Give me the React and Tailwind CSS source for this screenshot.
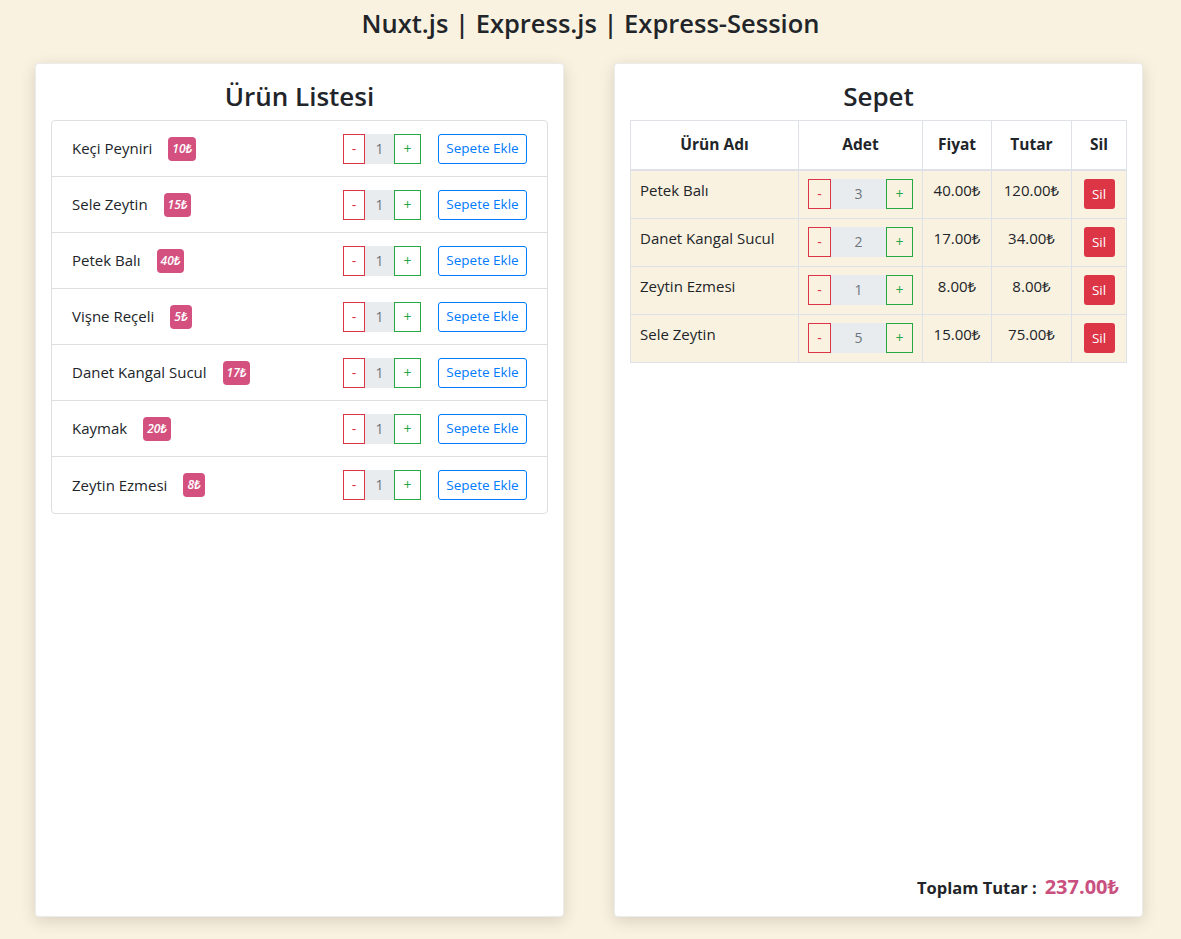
import React, { useState } from "react";

const urunler = [
  { id: 1, name: "Keçi Peyniri", price: 10 },
  { id: 2, name: "Sele Zeytin", price: 15 },
  { id: 3, name: "Petek Balı", price: 40 },
  { id: 4, name: "Vişne Reçeli", price: 5 },
  { id: 5, name: "Danet Kangal Sucul", price: 17 },
  { id: 6, name: "Kaymak", price: 20 },
  { id: 7, name: "Zeytin Ezmesi", price: 8 },
];

const sepetBaslangic = [
  { id: 3, name: "Petek Balı", price: 40, count: 3 },
  { id: 5, name: "Danet Kangal Sucul", price: 17, count: 2 },
  { id: 7, name: "Zeytin Ezmesi", price: 8, count: 1 },
  { id: 2, name: "Sele Zeytin", price: 15, count: 5 },
];

function Counter({ value, onMinus, onPlus, minusWidth, inputWidth }) {
  return (
    <div className="flex h-[30px] text-sm">
      <button
        onClick={onMinus}
        className={`${minusWidth} h-full border border-[#dc3545] text-[#dc3545] leading-none`}
      >
        -
      </button>
      <div
        className={`${inputWidth} h-full bg-[#e9ecef] flex items-center justify-center text-[#6c757d] text-[14px]`}
      >
        {value}
      </div>
      <button
        onClick={onPlus}
        className="w-[27px] h-full border border-[#28a745] text-[#28a745] leading-none"
      >
        +
      </button>
    </div>
  );
}

function UrunItem({ urun, onAdd }) {
  const [adet, setAdet] = useState(1);
  return (
    <li className="h-[56px] flex items-center px-5 text-[15px]">
      <span>{urun.name}</span>
      <span className="ml-4 h-[24px] px-[4px] rounded-[4px] bg-[#d4517f] text-white text-[12px] font-semibold italic flex items-center">
        {urun.price}₺
      </span>
      <div className="ml-auto">
        <Counter
          value={adet}
          minusWidth="w-[22px]"
          inputWidth="w-[29px]"
          onMinus={() => setAdet(Math.max(1, adet - 1))}
          onPlus={() => setAdet(adet + 1)}
        />
      </div>
      <button
        onClick={() => onAdd(urun, adet)}
        className="ml-[17px] h-[30px] w-[89px] border border-[#007bff] text-[#007bff] rounded-[3px] text-[13.5px]"
      >
        Sepete Ekle
      </button>
    </li>
  );
}

export default function App() {
  const [sepet, setSepet] = useState(sepetBaslangic);

  const addToCart = (urun, adet) => {
    const var_mi = sepet.find((s) => s.id === urun.id);
    if (var_mi) {
      setSepet(sepet.map((s) => (s.id === urun.id ? { ...s, count: s.count + adet } : s)));
    } else {
      setSepet([...sepet, { ...urun, count: adet }]);
    }
  };

  const changeCount = (id, diff) => {
    setSepet(
      sepet.map((s) => (s.id === id ? { ...s, count: Math.max(1, s.count + diff) } : s))
    );
  };

  const total = sepet.reduce((t, s) => t + s.price * s.count, 0);

  return (
    <div className="min-h-screen bg-[#faf2e0] text-[#212529] font-['Open_Sans','Noto_Sans',sans-serif]">
      <h3 className="pt-[6px] text-center text-[25.5px] leading-[34px] font-semibold">
        Nuxt.js | Express.js | Express-Session
      </h3>

      <div className="mt-[23px] pl-[35px] flex gap-[50px]">
        {/* Urun listesi */}
        <div className="w-[529px] h-[854px] bg-white rounded border border-black/[.08] shadow-[0_4px_16px_rgba(0,0,0,0.14)] px-[15px] pt-[15px]">
          <h3 className="text-center text-[26px] leading-[34px] font-semibold mb-[7px]">
            Ürün Listesi
          </h3>
          <ul className="border border-[#dfdfdf] rounded divide-y divide-[#dfdfdf]">
            {urunler.map((u) => (
              <UrunItem key={u.id} urun={u} onAdd={addToCart} />
            ))}
          </ul>
        </div>

        {/* Sepet */}
        <div className="w-[529px] h-[854px] bg-white rounded border border-black/[.08] shadow-[0_4px_16px_rgba(0,0,0,0.14)] px-[15px] pt-[15px] pb-[14px] flex flex-col">
          <h3 className="text-center text-[26px] leading-[34px] font-semibold mb-[7px]">
            Sepet
          </h3>
          <table className="table-fixed w-[497px] border-collapse text-[15px]">
            <thead>
              <tr className="bg-white text-[15.5px]">
                <th className="w-[168px] border border-[#dee2e6] border-b-2 pt-3 pb-[13px] text-center">Ürün Adı</th>
                <th className="w-[124px] border border-[#dee2e6] border-b-2 pt-3 pb-[13px] text-center">Adet</th>
                <th className="w-[69px] border border-[#dee2e6] border-b-2 pt-3 pb-[13px] text-center">Fiyat</th>
                <th className="w-[80px] border border-[#dee2e6] border-b-2 pt-3 pb-[13px] text-center">Tutar</th>
                <th className="w-[55px] border border-[#dee2e6] border-b-2 pt-3 pb-[13px] text-center">Sil</th>
              </tr>
            </thead>
            <tbody>
              {sepet.map((s) => (
                <tr key={s.id} className="bg-[#faf2e0]">
                  <td className="border border-[#dee2e6] px-[9px] pt-[8px] align-top whitespace-nowrap">{s.name}</td>
                  <td className="border border-[#dee2e6] px-[9px] pt-[8px] pb-[9px] align-top">
                    <Counter
                      value={s.count}
                      minusWidth="w-[23px]"
                      inputWidth="w-[56px]"
                      onMinus={() => changeCount(s.id, -1)}
                      onPlus={() => changeCount(s.id, 1)}
                    />
                  </td>
                  <td className="border border-[#dee2e6] pt-[8px] align-top text-center">
                    {s.price.toFixed(2)}₺
                  </td>
                  <td className="border border-[#dee2e6] pt-[8px] align-top text-center">
                    {(s.price * s.count).toFixed(2)}₺
                  </td>
                  <td className="border border-[#dee2e6] pt-[8px] pb-[9px] align-top text-center">
                    <button
                      onClick={() => setSepet(sepet.filter((x) => x.id !== s.id))}
                      className="w-[31px] h-[30px] bg-[#dc3545] text-white text-[13.5px] rounded-[3px]"
                    >
                      Sil
                    </button>
                  </td>
                </tr>
              ))}
            </tbody>
          </table>

          <div className="mt-auto flex items-baseline justify-end pr-[8px]">
            <span className="font-bold text-[16.5px]">Toplam Tutar :</span>
            <span className="ml-2 font-bold text-[20px] text-[#c9507f]">{total.toFixed(2)}₺</span>
          </div>
        </div>
      </div>
    </div>
  );
}
